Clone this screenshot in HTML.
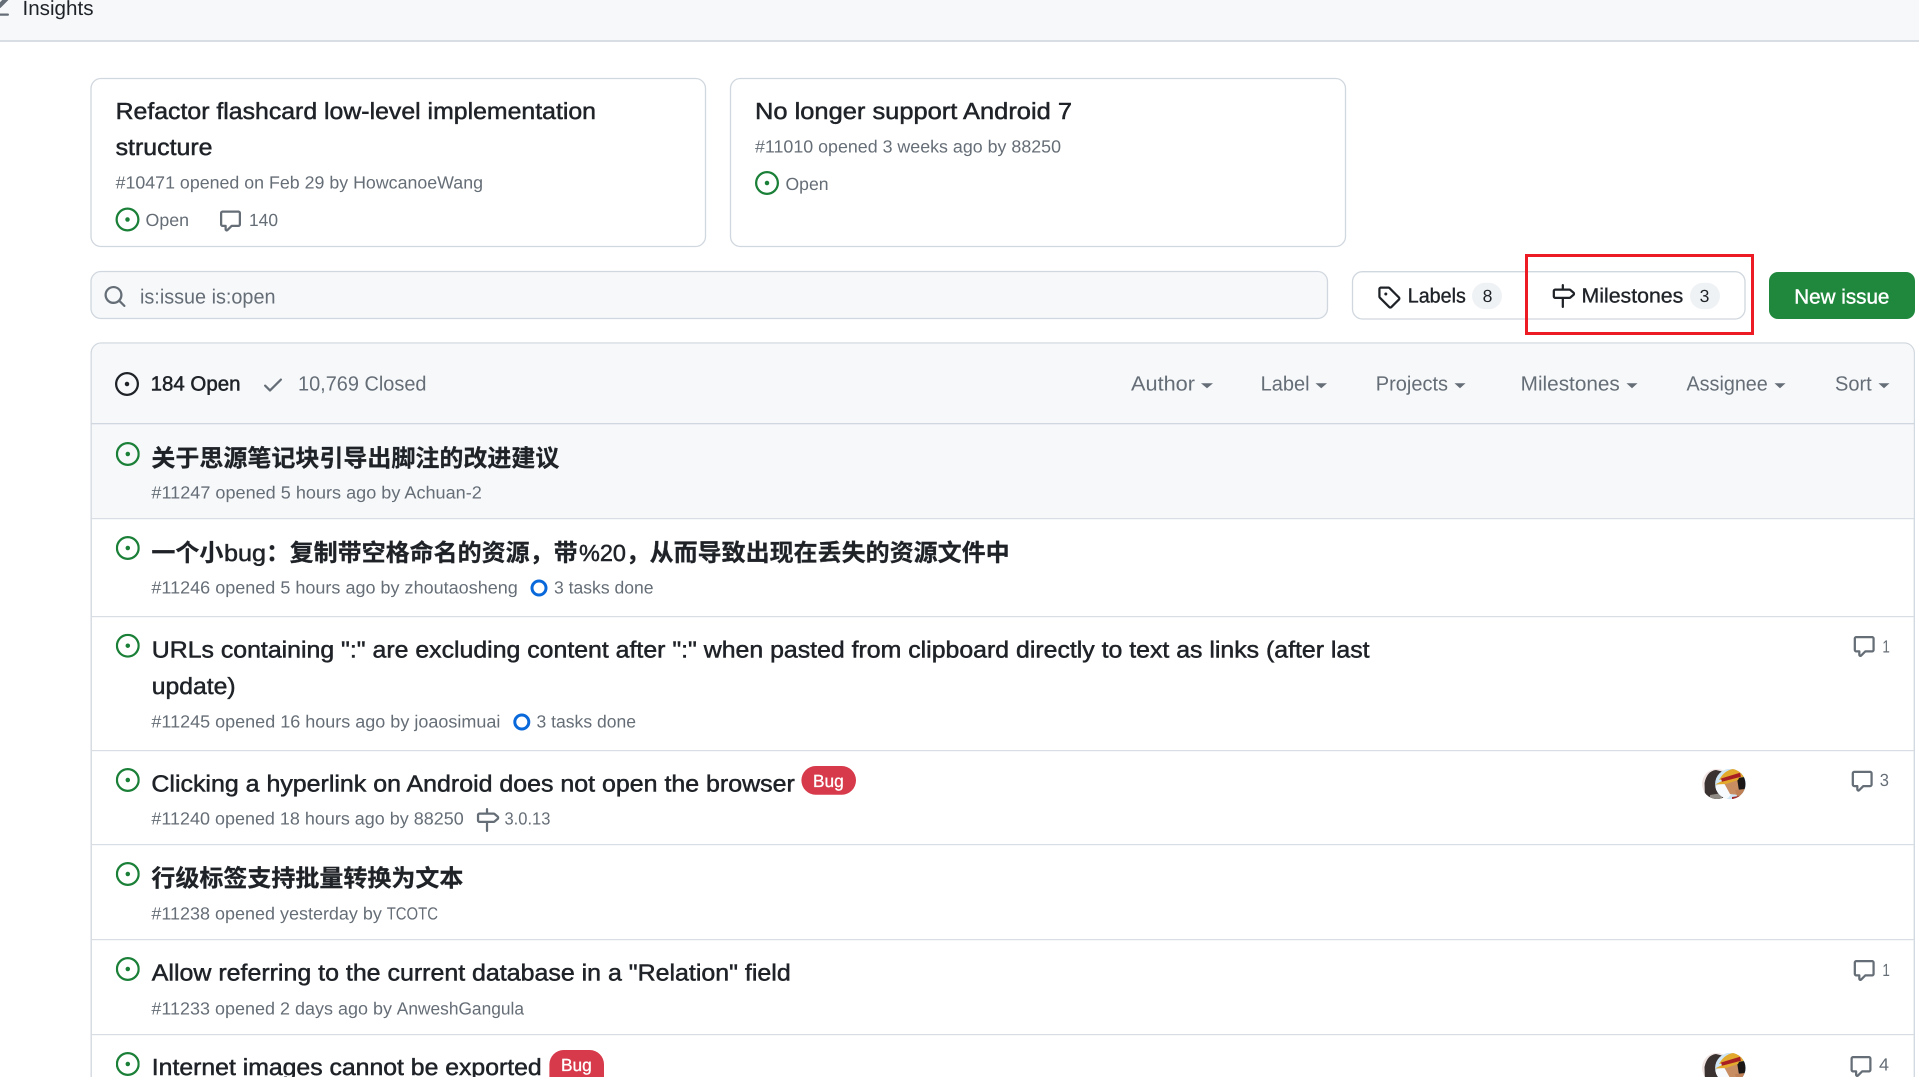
<!DOCTYPE html>
<html lang="en">
<head>
<meta charset="utf-8">
<title>Issues</title>
<style>
html,body{margin:0;padding:0;background:#fff;width:1919px;height:1077px;overflow:hidden}
svg{display:block}
text{font-family:"Liberation Sans","Noto Sans CJK SC",sans-serif;text-rendering:geometricPrecision}
.t{font-size:23.3px;fill:#1f2328;stroke:#1f2328;stroke-width:.5px}
.c{font-size:24px;font-weight:700;fill:#1f2328;stroke:#1f2328;stroke-width:.25px;font-family:"Noto Sans CJK SC","Liberation Sans",sans-serif}
.m{font-size:17.6px;fill:#656d76}
.f{font-size:20.5px;fill:#656d76}
.b{font-size:20.5px;fill:#1f2328;stroke:#1f2328;stroke-width:.35px}
.l{font-size:17.6px;fill:#fff;stroke:#fff;stroke-width:.3px}
.g{fill:#1a7f37}
.gr{fill:#656d76}
.d{fill:#1f2328}
</style>
</head>
<body>
<svg xmlns="http://www.w3.org/2000/svg" width="1919" height="1077" viewBox="0 0 1919 1077">
<defs>
<symbol id="io" viewBox="0 0 16 16"><path d="M8 9.5a1.5 1.5 0 1 0 0-3 1.5 1.5 0 0 0 0 3Z"/><path d="M8 0a8 8 0 1 1 0 16A8 8 0 0 1 8 0ZM1.5 8a6.5 6.5 0 1 0 13 0 6.5 6.5 0 0 0-13 0Z"/></symbol>
<symbol id="cm" viewBox="0 0 16 16"><path d="M1 2.75C1 1.784 1.784 1 2.75 1h10.5c.966 0 1.75.784 1.75 1.75v7.5A1.75 1.75 0 0 1 13.25 12H9.06l-2.573 2.573A1.458 1.458 0 0 1 4 13.543V12H2.75A1.75 1.75 0 0 1 1 10.25Zm1.75-.25a.25.25 0 0 0-.25.25v7.5c0 .138.112.25.25.25h2a.75.75 0 0 1 .75.75v2.19l2.72-2.72a.749.749 0 0 1 .53-.22h4.5a.25.25 0 0 0 .25-.25v-7.5a.25.25 0 0 0-.25-.25Z"/></symbol>
<symbol id="tg" viewBox="0 0 16 16"><path d="M1 7.775V2.75C1 1.784 1.784 1 2.75 1h5.025c.464 0 .91.184 1.238.513l6.25 6.25a1.75 1.75 0 0 1 0 2.474l-5.026 5.026a1.75 1.75 0 0 1-2.474 0l-6.25-6.25A1.752 1.752 0 0 1 1 7.775Zm1.5 0c0 .066.026.13.073.177l6.25 6.25a.25.25 0 0 0 .354 0l5.025-5.025a.25.25 0 0 0 0-.354l-6.25-6.25a.25.25 0 0 0-.177-.073H2.75a.25.25 0 0 0-.25.25ZM6 5a1 1 0 1 1 0 2 1 1 0 0 1 0-2Z"/></symbol>
<symbol id="ms" viewBox="0 0 16 16"><path d="M7.75 0a.75.75 0 0 1 .75.75V3h3.634c.414 0 .814.147 1.13.414l2.07 1.75a1.75 1.75 0 0 1 0 2.672l-2.07 1.75a1.75 1.75 0 0 1-1.13.414H8.5v5.25a.75.75 0 0 1-1.5 0V10H2.75A1.75 1.75 0 0 1 1 8.25v-3.5C1 3.784 1.784 3 2.75 3H7V.75A.75.75 0 0 1 7.75 0Zm4.384 8.5a.25.25 0 0 0 .161-.06l2.07-1.75a.248.248 0 0 0 0-.38l-2.07-1.75a.25.25 0 0 0-.161-.06H2.75a.25.25 0 0 0-.25.25v3.5c0 .138.112.25.25.25h9.384Z"/></symbol>
<symbol id="se" viewBox="0 0 16 16"><path d="M10.68 11.74a6 6 0 0 1-7.922-8.982 6 6 0 0 1 8.982 7.922l3.04 3.04a.749.749 0 0 1-.326 1.275.749.749 0 0 1-.734-.215ZM11.5 7a4.499 4.499 0 1 0-8.997 0A4.499 4.499 0 0 0 11.5 7Z"/></symbol>
<symbol id="ck" viewBox="0 0 16 16"><path d="M13.78 4.22a.75.75 0 0 1 0 1.06l-7.25 7.25a.75.75 0 0 1-1.06 0L2.22 9.28a.751.751 0 0 1 .018-1.042.751.751 0 0 1 1.042-.018L6 10.94l6.72-6.72a.75.75 0 0 1 1.06 0Z"/></symbol>
<symbol id="gh" viewBox="0 0 16 16"><path d="M1.5 1.75V13.5h13.75a.75.75 0 0 1 0 1.5H.75a.75.75 0 0 1-.75-.75V1.75a.75.75 0 0 1 1.5 0Zm14.28 2.53-5.25 5.25a.75.75 0 0 1-1.06 0L7 7.06 4.28 9.78a.751.751 0 0 1-1.042-.018.751.751 0 0 1-.018-1.042l3.25-3.25a.75.75 0 0 1 1.06 0L8.5 7.44l4.72-4.72a.751.751 0 0 1 1.042.018.751.751 0 0 1 .018 1.042Z"/></symbol>
<clipPath id="ca1"><circle cx="15" cy="15" r="15"/></clipPath>
<clipPath id="ca2"><circle cx="28.3" cy="15" r="15.2"/></clipPath>
<symbol id="av" viewBox="0 0 44 31">
  <g clip-path="url(#ca1)">
    <rect x="0" y="0" width="30" height="31" fill="#efe4e2"/>
    <path d="M3 31 L2.5 14 Q5 2 14 1 L22 3 L20 14 L22 31 Z" fill="#3a3230"/>
    <path d="M8 26 L20 24 L20 31 L8 31 Z" fill="#8f8a84"/>
  </g>
  <g clip-path="url(#ca2)">
    <rect x="12" y="-1" width="33" height="33" fill="#cfe6f7"/>
    <ellipse cx="20" cy="23" rx="9" ry="8" fill="#f8fbfd"/>
    <rect x="39" y="3" width="6" height="22" fill="#59a9e6"/>
    <path d="M17 11 Q24 -2 38 0 L43 8 Z" fill="#e2a92c"/>
    <path d="M22 14 L36 10 L37 26 L28 25 Z" fill="#c98d62"/>
    <path d="M35 9 L43 8 L44 20 L37 22 Z" fill="#1b1716"/>
    <path d="M33 21 L44 20 L44 28 L36 30 Z" fill="#bf8055"/>
    <path d="M30 28 L44 26 L44 32 L30 32 Z" fill="#a02b2a"/>
    <path d="M13 15.5 L20 12 L38 7 L36 11 L24 15 Z" fill="#e2a92c"/>
    <path d="M19 9.5 L38 3.8 L39 7.8 L20 12.8 Z" fill="#a81f23"/>
  </g>
</symbol>
</defs>

<!-- top bar -->
<rect x="0" y="0" width="1919" height="40" fill="#f6f8fa"/>
<rect x="0" y="40" width="1919" height="2" fill="#d8dee4"/>
<use href="#gh" x="-15" y="-6.7" width="24" height="24" class="gr"/>
<text x="22.5" y="15" font-size="20.5" fill="#1f2328" textLength="71" lengthAdjust="spacingAndGlyphs">Insights</text>

<!-- pinned cards -->
<rect x="91" y="78.5" width="614.5" height="168" rx="10" fill="#fff" stroke="#d0d7de" stroke-width="1.3"/>
<rect x="730.5" y="78.5" width="615" height="168" rx="10" fill="#fff" stroke="#d0d7de" stroke-width="1.3"/>
<text class="t" x="115.6" y="119" textLength="480.4" lengthAdjust="spacingAndGlyphs">Refactor flashcard low-level implementation</text>
<text class="t" x="115.6" y="155" textLength="96.9" lengthAdjust="spacingAndGlyphs">structure</text>
<text class="m" x="115.6" y="188.6" textLength="367.4" lengthAdjust="spacingAndGlyphs">#10471 opened on Feb 29 by HowcanoeWang</text>
<use href="#io" x="115.5" y="207.5" width="24" height="24" class="g"/>
<text class="m" x="145.5" y="226" textLength="43.5" lengthAdjust="spacingAndGlyphs">Open</text>
<use href="#cm" x="218.5" y="209" width="24" height="24" class="gr"/>
<text class="m" x="249" y="226" textLength="29" lengthAdjust="spacingAndGlyphs">140</text>

<text class="t" x="755" y="119" textLength="317" lengthAdjust="spacingAndGlyphs">No longer support Android 7</text>
<text class="m" x="755" y="152.6" textLength="306" lengthAdjust="spacingAndGlyphs">#11010 opened 3 weeks ago by 88250</text>
<use href="#io" x="755" y="171" width="24" height="24" class="g"/>
<text class="m" x="785.5" y="190" textLength="43" lengthAdjust="spacingAndGlyphs">Open</text>

<!-- search -->
<rect x="91" y="271.5" width="1236.5" height="47" rx="10" fill="#f6f8fa" stroke="#d0d7de" stroke-width="1.3"/>
<use href="#se" x="103" y="284.5" width="24" height="24" class="gr"/>
<text x="140" y="303.5" font-size="20.5" fill="#656d76" textLength="135.5" lengthAdjust="spacingAndGlyphs">is:issue is:open</text>

<!-- labels / milestones -->
<rect x="1352.5" y="271.7" width="392.5" height="47.3" rx="10" fill="#fff" stroke="#d0d7de" stroke-width="1.3"/>
<use href="#tg" x="1376.8" y="285" width="24" height="24" class="d"/>
<text class="b" x="1407.8" y="302.7" textLength="58" lengthAdjust="spacingAndGlyphs">Labels</text>
<rect x="1472" y="282.7" width="30" height="26.5" rx="13.25" fill="#eff2f5"/>
<text x="1487.5" y="302" font-size="17.6" fill="#1f2328" text-anchor="middle">8</text>
<use href="#ms" x="1551.2" y="284" width="24" height="24" class="d"/>
<text class="b" x="1581.5" y="302.7" textLength="101.8" lengthAdjust="spacingAndGlyphs">Milestones</text>
<rect x="1690" y="282.7" width="30" height="26.5" rx="13.25" fill="#eff2f5"/>
<text x="1704.5" y="302" font-size="17.6" fill="#1f2328" text-anchor="middle">3</text>
<rect x="1526.5" y="255.5" width="226" height="78" fill="none" stroke="#ed1c24" stroke-width="3"/>

<rect x="1769" y="272" width="146" height="47" rx="9" fill="#1f883d"/>
<text x="1794.3" y="303.3" font-size="20.5" fill="#fff" stroke="#fff" stroke-width=".4" textLength="95.1" lengthAdjust="spacingAndGlyphs">New issue</text>

<!-- issue box -->
<path d="M91.2 1077V353a10 10 0 0 1 10-10H1904a10 10 0 0 1 10.3 10V1077" fill="#fff" stroke="#d0d7de" stroke-width="1.3"/>
<path d="M91.9 423V353a9.4 9.4 0 0 1 9.4-9.4H1904a9.6 9.6 0 0 1 9.7 9.6V423Z" fill="#f6f8fa"/>
<rect x="91.9" y="424" width="1821.8" height="94" fill="#f6f8fa"/>
<rect x="90.6" y="423" width="1824.3" height="1.3" fill="#d0d7de"/>
<rect x="91.9" y="518" width="1822" height="1.2" fill="#d8dee4"/>
<rect x="91.9" y="616" width="1822" height="1.2" fill="#d8dee4"/>
<rect x="91.9" y="750" width="1822" height="1.2" fill="#d8dee4"/>
<rect x="91.9" y="844" width="1822" height="1.2" fill="#d8dee4"/>
<rect x="91.9" y="939" width="1822" height="1.2" fill="#d8dee4"/>
<rect x="91.9" y="1034" width="1822" height="1.2" fill="#d8dee4"/>

<use href="#io" x="115" y="372" width="24" height="24" class="d"/>
<text class="b" x="150.6" y="390.7" textLength="89.9" lengthAdjust="spacingAndGlyphs" style="stroke-width:.5px">184 Open</text>
<use href="#ck" x="261" y="372.5" width="24" height="24" class="gr"/>
<text class="f" x="298" y="390.7" textLength="128.5" lengthAdjust="spacingAndGlyphs">10,769 Closed</text>

<text class="f" x="1131" y="390.7" textLength="64" lengthAdjust="spacingAndGlyphs">Author</text>
<path d="M1201 383.3h12l-6 5Z" class="gr"/>
<text class="f" x="1260.6" y="390.7" textLength="49" lengthAdjust="spacingAndGlyphs">Label</text>
<path d="M1315.5 383.3h11.5l-5.75 5Z" class="gr"/>
<text class="f" x="1375.8" y="390.7" textLength="72.2" lengthAdjust="spacingAndGlyphs">Projects</text>
<path d="M1454.5 383.3h11l-5.5 5Z" class="gr"/>
<text class="f" x="1520.7" y="390.7" textLength="99.1" lengthAdjust="spacingAndGlyphs">Milestones</text>
<path d="M1626.5 383.3h11l-5.5 5Z" class="gr"/>
<text class="f" x="1686.5" y="390.7" textLength="81.3" lengthAdjust="spacingAndGlyphs">Assignee</text>
<path d="M1774.5 383.3h11l-5.5 5Z" class="gr"/>
<text class="f" x="1835" y="390.7" textLength="36.7" lengthAdjust="spacingAndGlyphs">Sort</text>
<path d="M1878.5 383.3h11l-5.5 5Z" class="gr"/>

<!-- row 1 -->
<use href="#io" x="115.8" y="442" width="24" height="24" class="g"/>
<text class="c" x="151.4" y="466.3" textLength="408" lengthAdjust="spacingAndGlyphs">关于思源笔记块引导出脚注的改进建议</text>
<text class="m" x="151.4" y="498.6" textLength="330.4" lengthAdjust="spacingAndGlyphs">#11247 opened 5 hours ago by Achuan-2</text>

<!-- row 2 -->
<use href="#io" x="115.8" y="536" width="24" height="24" class="g"/>
<text class="c" x="151.4" y="561" textLength="72" lengthAdjust="spacingAndGlyphs">一个小</text>
<text class="t" x="224" y="561" textLength="42" lengthAdjust="spacingAndGlyphs">bug</text>
<text class="c" x="266" y="561">：</text>
<text class="c" x="289.6" y="561" textLength="288" lengthAdjust="spacingAndGlyphs">复制带空格命名的资源，带</text>
<text class="t" x="579" y="561" textLength="47" lengthAdjust="spacingAndGlyphs">%20</text>
<text class="c" x="626" y="561">，</text>
<text class="c" x="649.6" y="561" textLength="360" lengthAdjust="spacingAndGlyphs">从而导致出现在丢失的资源文件中</text>
<text class="m" x="151.4" y="593.6" textLength="366.4" lengthAdjust="spacingAndGlyphs">#11246 opened 5 hours ago by zhoutaosheng</text>
<circle cx="539" cy="588" r="7" fill="none" stroke="#0969da" stroke-width="3"/>
<text class="m" x="554" y="593.6" textLength="99.5" lengthAdjust="spacingAndGlyphs">3 tasks done</text>

<!-- row 3 -->
<use href="#io" x="115.8" y="633.7" width="24" height="24" class="g"/>
<text class="t" x="151.8" y="657.7" textLength="1217.8" lengthAdjust="spacingAndGlyphs">URLs containing ":" are excluding content after ":" when pasted from clipboard directly to text as links (after last</text>
<text class="t" x="151.8" y="694" textLength="83.8" lengthAdjust="spacingAndGlyphs">update)</text>
<text class="m" x="151.4" y="727.5" textLength="349" lengthAdjust="spacingAndGlyphs">#11245 opened 16 hours ago by joaosimuai</text>
<circle cx="521.8" cy="722" r="7" fill="none" stroke="#0969da" stroke-width="3"/>
<text class="m" x="536.5" y="727.5" textLength="99.5" lengthAdjust="spacingAndGlyphs">3 tasks done</text>
<use href="#cm" x="1852.2" y="634.5" width="24" height="24" class="gr"/>
<text class="m" x="1882.4" y="652.7" textLength="7.5" lengthAdjust="spacingAndGlyphs">1</text>

<!-- row 4 -->
<use href="#io" x="115.8" y="768" width="24" height="24" class="g"/>
<text class="t" x="151.4" y="791.7" textLength="643.4" lengthAdjust="spacingAndGlyphs">Clicking a hyperlink on Android does not open the browser</text>
<rect x="801.4" y="766" width="54.6" height="28.7" rx="14.3" fill="#d73a4a"/>
<text class="l" x="813" y="787" textLength="30.8" lengthAdjust="spacingAndGlyphs">Bug</text>
<text class="m" x="151.4" y="824.6" textLength="312.3" lengthAdjust="spacingAndGlyphs">#11240 opened 18 hours ago by 88250</text>
<use href="#ms" x="475.4" y="808" width="24" height="24" class="gr"/>
<text class="m" x="504.5" y="824.6" textLength="45.9" lengthAdjust="spacingAndGlyphs">3.0.13</text>
<use href="#av" x="1702" y="769" width="44" height="31"/>
<use href="#cm" x="1850.2" y="769.2" width="24" height="24" class="gr"/>
<text class="m" x="1879.8" y="786" textLength="9.2" lengthAdjust="spacingAndGlyphs">3</text>

<!-- row 5 -->
<use href="#io" x="115.8" y="862" width="24" height="24" class="g"/>
<text class="c" x="151.4" y="886.7" textLength="312" lengthAdjust="spacingAndGlyphs">行级标签支持批量转换为文本</text>
<text class="m" x="151.4" y="919.6" textLength="230.5" lengthAdjust="spacingAndGlyphs">#11238 opened yesterday by</text>
<text class="m" x="386.7" y="919.6" textLength="51.3" lengthAdjust="spacingAndGlyphs">TCOTC</text>

<!-- row 6 -->
<use href="#io" x="115.8" y="957" width="24" height="24" class="g"/>
<text class="t" x="151.8" y="980.7" textLength="638.9" lengthAdjust="spacingAndGlyphs">Allow referring to the current database in a "Relation" field</text>
<text class="m" x="151.4" y="1014.6" textLength="240.6" lengthAdjust="spacingAndGlyphs">#11233 opened 2 days ago by</text>
<text class="m" x="396.8" y="1014.6" textLength="127.2" lengthAdjust="spacingAndGlyphs">AnweshGangula</text>
<use href="#cm" x="1852.2" y="958.5" width="24" height="24" class="gr"/>
<text class="m" x="1882.4" y="976" textLength="7.5" lengthAdjust="spacingAndGlyphs">1</text>

<!-- row 7 -->
<svg x="115.8" y="1052" width="24" height="25" viewBox="0 0 24 25"><use href="#io" width="24" height="24" class="g"/></svg>
<text class="t" x="151.8" y="1075" textLength="389.9" lengthAdjust="spacingAndGlyphs">Internet images cannot be exported</text>
<path d="M549.4 1077V1064.3a14.3 14.3 0 0 1 14.3-14.3H589.7a14.3 14.3 0 0 1 14.3 14.3V1077Z" fill="#d73a4a"/>
<text class="l" x="561" y="1071" textLength="30.8" lengthAdjust="spacingAndGlyphs">Bug</text>
<svg x="1702" y="1053" width="44" height="24" viewBox="0 0 44 24"><use href="#av" width="44" height="31"/></svg>
<svg x="1849" y="1054.5" width="24" height="22.5" viewBox="0 0 24 22.5"><use href="#cm" width="24" height="24" class="gr"/></svg>
<text class="m" x="1879" y="1070.7" textLength="10" lengthAdjust="spacingAndGlyphs">4</text>
</svg>
</body>
</html>
